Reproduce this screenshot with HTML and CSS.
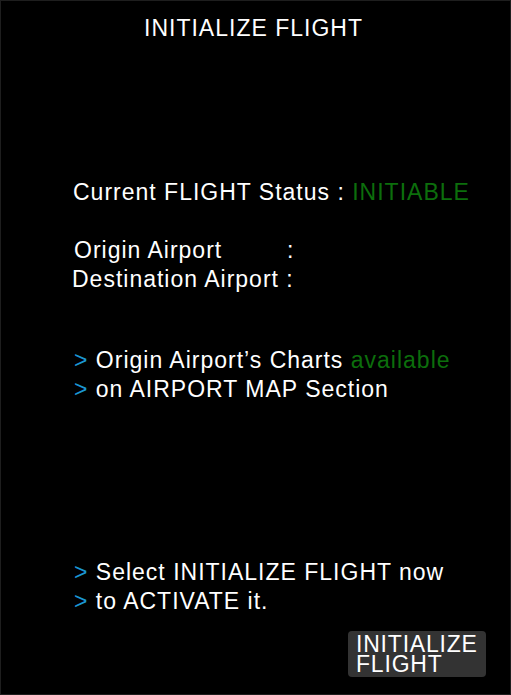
FILE: index.html
```html
<!DOCTYPE html>
<html>
<head>
<meta charset="utf-8">
<link rel="stylesheet" href="styles.css">
</head>
<body>
<div class="screen">
  <div class="title">INITIALIZE FLIGHT</div>
  <div class="content">
    <div class="block status">
      <div class="line">Current FLIGHT Status : <span class="green">INITIABLE</span></div>
    </div>
    <div class="block airports">
      <div class="line origin"><span class="label">Origin Airport</span>:</div>
      <div class="line dest"><span>Destination Airport </span>:</div>
    </div>
    <div class="block charts">
      <div class="line"><span class="blue">&gt;</span> Origin Airport’s Charts <span class="green">available</span></div>
      <div class="line"><span class="blue">&gt;</span> on AIRPORT MAP Section</div>
    </div>
    <div class="block select">
      <div class="line"><span class="blue">&gt;</span> Select INITIALIZE FLIGHT now</div>
      <div class="line"><span class="blue">&gt;</span> to ACTIVATE it.</div>
    </div>
  </div>
  <div class="actions">
    <button class="btn">INITIALIZE<br>FLIGHT</button>
  </div>
</div>
</body>
</html>
```
FILE: styles.css
```css
html, body {
  margin: 0;
  padding: 0;
  background: #000;
}
.screen {
  box-sizing: border-box;
  width: 511px;
  height: 695px;
  border: 1px solid #1e1e1e;
  background: #000;
  color: #fff;
  font-family: "Liberation Sans", Arial, sans-serif;
  font-size: 23px;
  line-height: 29px;
  letter-spacing: 1px;
  display: flex;
  flex-direction: column;
}
.title {
  margin-top: 13px;
  text-align: center;
  padding-right: 4px;
}
.content {
  padding-left: 72px;
}
.block .line {
  white-space: nowrap;
}
.status {
  margin-top: 135px;
}
.airports {
  margin-top: 29px;
}
.origin {
  padding-left: 1px;
}
.origin .label {
  display: inline-block;
  width: 213px;
}
.dest {
  margin-left: -1px;
}
.charts {
  margin-top: 52px;
  padding-left: 1px;
}
.select {
  margin-top: 154px;
  padding-left: 1px;
}
.green {
  color: #0c6e0c;
}
.blue {
  color: #1b96d2;
}
.actions {
  display: flex;
  justify-content: flex-end;
  padding-right: 24px;
  margin-top: 15px;
}
.btn {
  font-family: "Liberation Sans", Arial, sans-serif;
  font-size: 23px;
  line-height: 20px;
  letter-spacing: 0.8px;
  color: #fff;
  background: #333;
  border: none;
  border-radius: 4px;
  padding: 3px 7px 3px 8px;
  width: 138px;
  text-align: left;
  margin: 0;
}
```
